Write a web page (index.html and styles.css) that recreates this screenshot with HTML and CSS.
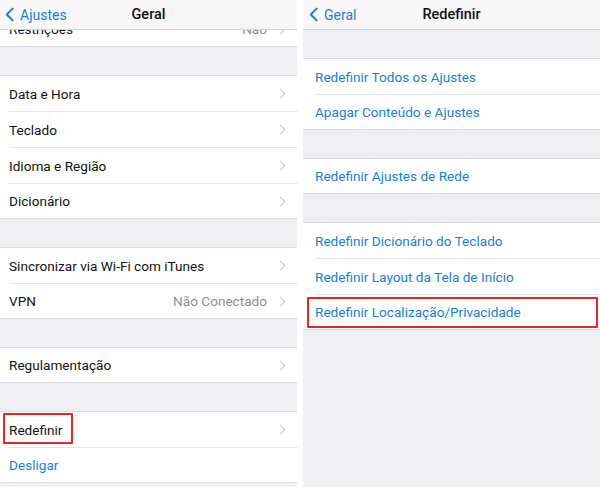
FILE: index.html
```html
<!DOCTYPE html>
<html lang="pt">
<head>
  <meta charset="UTF-8" />
  <meta name="viewport" content="width=device-width, initial-scale=1.0"/>
  <title>Geral / Redefinir</title>
  <link rel="stylesheet" href="styles.css">
</head>
<body>

<div class="shots">

  <!-- Geral -->
  <div class="screen">
    <div class="navbar">
      <span class="back"><svg class="back-icon" viewBox="0 0 10 16"><path d="M8.5 1.5 L2 8 L8.5 14.5" /></svg>Ajustes</span>
      <span class="title">Geral</span>
    </div>
    <div class="content">
      <div class="group first">
        <div class="row"><span class="label">Restrições</span><span class="value">Não</span><span class="chev"></span></div>
      </div>
      <div class="group">
        <div class="row"><span class="label">Data e Hora</span><span class="chev"></span></div>
        <div class="row"><span class="label">Teclado</span><span class="chev"></span></div>
        <div class="row"><span class="label">Idioma e Região</span><span class="chev"></span></div>
        <div class="row"><span class="label">Dicionário</span><span class="chev"></span></div>
      </div>
      <div class="group">
        <div class="row"><span class="label">Sincronizar via Wi-Fi com iTunes</span><span class="chev"></span></div>
        <div class="row"><span class="label">VPN</span><span class="value">Não Conectado</span><span class="chev"></span></div>
      </div>
      <div class="group">
        <div class="row"><span class="label">Regulamentação</span><span class="chev"></span></div>
      </div>
      <div class="group">
        <div class="row"><span class="label">Redefinir</span><span class="chev"></span><span class="mark mark-left"></span></div>
        <div class="row"><span class="label link">Desligar</span></div>
      </div>
    </div>
  </div>

  <!-- Redefinir -->
  <div class="screen reset">
    <div class="navbar">
      <span class="back"><svg class="back-icon" viewBox="0 0 10 16"><path d="M8.5 1.5 L2 8 L8.5 14.5" /></svg>Geral</span>
      <span class="title">Redefinir</span>
    </div>
    <div class="content">
      <div class="group">
        <div class="row"><span class="label link">Redefinir Todos os Ajustes</span></div>
        <div class="row"><span class="label link">Apagar Conteúdo e Ajustes</span></div>
      </div>
      <div class="group">
        <div class="row"><span class="label link">Redefinir Ajustes de Rede</span></div>
      </div>
      <div class="group">
        <div class="row"><span class="label link">Redefinir Dicionário do Teclado</span></div>
        <div class="row"><span class="label link">Redefinir Layout da Tela de Início</span></div>
        <div class="row"><span class="label link">Redefinir Localização/Privacidade</span><span class="mark mark-right"></span></div>
      </div>
    </div>
  </div>

</div>

</body>
</html>
```

FILE: styles.css
```css
body {
  margin: 0;
  background: #ffffff;
  font-family: 'Roboto', 'Liberation Sans', sans-serif;
  font-size: 13.6px;
  color: #111;
}

.shots {
  display: flex;
  gap: 6px;
  width: 600px;
  height: 487px;
  overflow: hidden;
}

.screen {
  width: 297px;
  height: 487px;
  background: #efeff4;
  display: flex;
  flex-direction: column;
  overflow: hidden;
}

.navbar {
  position: relative;
  z-index: 2;
  height: 29px;
  flex: none;
  background: #f7f7f8;
  border-bottom: 1px solid #d6d6da;
  display: flex;
  align-items: center;
  justify-content: center;
}

.back {
  position: absolute;
  left: 5px;
  top: 0;
  height: 29px;
  display: flex;
  align-items: center;
  gap: 6px;
  color: #1a7ed6;
  font-size: 14px;
}

.reset .back {
  left: 6px;
}

.back-icon {
  width: 9px;
  height: 15px;
}

.back-icon path {
  fill: none;
  stroke: #1a7ed6;
  stroke-width: 2.2;
  stroke-linecap: round;
  stroke-linejoin: round;
}

.title {
  font-weight: 500;
  font-size: 14.5px;
  color: #111;
}

.content {
  display: flex;
  flex-direction: column;
  gap: 28px;
  padding-top: 28px;
}

.group {
  background: #fff;
  border-top: 1px solid #dcdce0;
  border-bottom: 1px solid #dcdce0;
}

.group.first {
  margin-top: -46px;
  border-top: none;
}

.row {
  position: relative;
  height: 36px;
  margin-left: 9px;
  padding-right: 12px;
  display: flex;
  align-items: center;
  border-top: 1px solid #e4e4e7;
  box-sizing: border-box;
}

.reset .row {
  margin-left: 12px;
}

.row:first-child,
.row:last-child {
  border-top: none;
  height: 35px;
}

.row:last-child {
  border-top: 1px solid #e4e4e7;
}

.row:only-child {
  border-top: none;
  height: 34px;
}

.label {
  flex: 1;
}

.link {
  color: #1a7ed6;
}

.value {
  color: #8e8e93;
  margin-right: 10px;
}

.chev {
  width: 6px;
  height: 6px;
  border-top: 1.3px solid #c7c7cc;
  border-right: 1.3px solid #c7c7cc;
  transform: rotate(45deg);
  margin-right: 1px;
}

.mark {
  position: absolute;
  border: 2px solid #ee2224;
  border-radius: 1px;
}

.mark-left {
  left: -6px;
  top: 1px;
  width: 66px;
  height: 27px;
}

.mark-right {
  left: -8px;
  top: 2px;
  width: 287px;
  height: 27px;
}
```
